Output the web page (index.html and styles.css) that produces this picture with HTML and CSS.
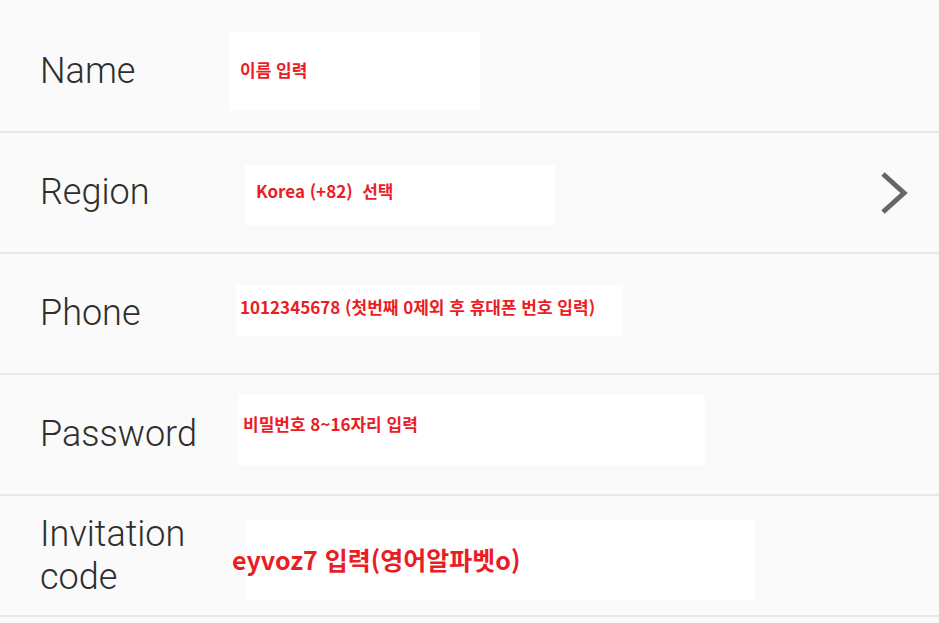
FILE: index.html
```html
<!DOCTYPE html>
<html lang="ko">
<head>
<meta charset="utf-8">
<title>Register</title>
<link rel="stylesheet" href="styles.css">
</head>
<body>
<div class="form">
  <div class="row">
    <div class="label">Name</div>
    <div class="box box-name"><span class="hint">이름 입력</span></div>
  </div>
  <div class="row">
    <div class="label">Region</div>
    <div class="box box-region"><span class="hint">Korea (+82)&nbsp; 선택</span></div>
    <svg class="chevron" width="28" height="44" viewBox="0 0 28 44"><polyline points="3,3 24,22 3,41" fill="none" stroke="#666" stroke-width="5"/></svg>
  </div>
  <div class="row">
    <div class="label">Phone</div>
    <div class="box box-phone"><span class="hint">1012345678 (첫번째 0제외 후 휴대폰 번호 입력)</span></div>
  </div>
  <div class="row">
    <div class="label">Password</div>
    <div class="box box-password"><span class="hint">비밀번호 8~16자리 입력</span></div>
  </div>
  <div class="row">
    <div class="label">Invitation code</div>
    <div class="box box-invite"><span class="hint hint-big">eyvoz7 입력(영어알파벳o)</span></div>
  </div>
</div>
</body>
</html>
```

FILE: styles.css
```css
html, body {
  margin: 0;
  background: #fafafa;
}
body {
  font-family: Roboto, "Noto Sans", sans-serif;
}
.form {
  padding-top: 12px;
}
.row {
  display: flex;
  align-items: flex-start;
  height: 119px;
  border-bottom: 2px solid #e8e8e8;
  padding-left: 40px;
}
.label {
  width: 189px;
  flex: none;
  align-self: center;
  font-size: 36px;
  font-weight: 300;
  line-height: 43px;
  color: #2e2e2e;
}
.box {
  flex: none;
  box-sizing: border-box;
  background: #fff;
  font-family: "Noto Sans CJK KR", "Noto Sans", sans-serif;
  font-weight: 700;
  font-size: 17px;
  line-height: 20px;
  color: #ec1c24;
  white-space: nowrap;
}
.hint {
  display: block;
}
.box-name {
  margin-top: 20px;
  width: 251px;
  height: 78px;
  padding: 28px 0 0 11px;
}
.box-region {
  margin-top: 32px;
  margin-left: 16px;
  width: 310px;
  height: 60px;
  padding: 16px 0 0 11px;
}
.box-phone {
  margin-top: 31px;
  margin-left: 7px;
  width: 387px;
  height: 51px;
  padding: 12px 0 0 4px;
}
.box-password {
  margin-top: 20px;
  margin-left: 9px;
  width: 467px;
  height: 70px;
  padding: 19px 0 0 5px;
}
.box-invite {
  margin-top: 24px;
  margin-left: 17px;
  width: 509px;
  height: 80px;
  padding-top: 24px;
}
.hint-big {
  margin-left: -14px;
  font-size: 25px;
  line-height: 30px;
}
.chevron {
  flex: none;
  align-self: center;
  margin-left: auto;
  margin-right: 31px;
}
```
